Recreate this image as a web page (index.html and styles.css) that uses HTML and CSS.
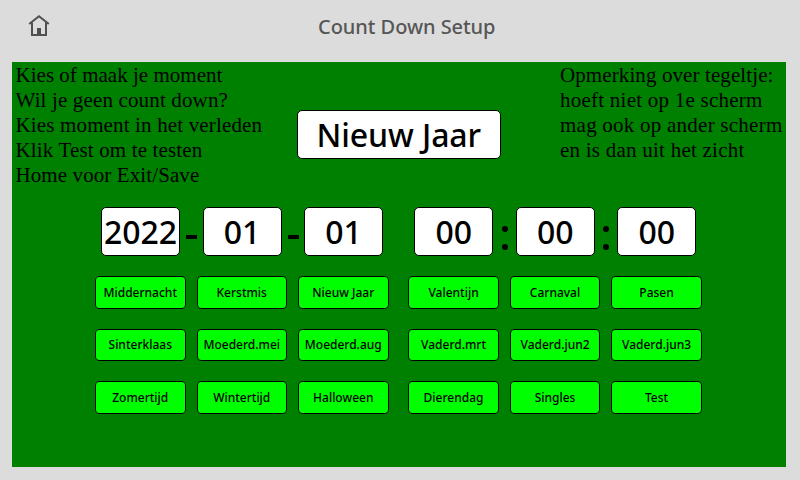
FILE: index.html
```
<!DOCTYPE html>
<html lang="nl">
<head>
<meta charset="utf-8">
<title>Count Down Setup</title>
<link rel="stylesheet" href="styles.css">
</head>
<body>
<header class="topbar">
<svg class="home" viewBox="0 0 22 22" width="22" height="22" fill="none" stroke="#505050"><path d="M1.2 9 11 1.3 20.8 9" stroke-width="2"/><path d="M4 7.5V20H18V7.5" stroke-width="2"/><path d="M9 13h4v7H9z" fill="#505050" stroke="none"/></svg>
<h1 class="title">Count Down Setup</h1>
</header>
<main class="panel">
<section class="intro">
<div class="note"><p><span class="l1">Kies of maak je moment</span></p><p><span class="l2">Wil je geen count down?</span></p><p><span class="l3">Kies moment in het verleden</span></p><p><span class="l4">Klik Test om te testen</span></p><p><span class="l5">Home voor Exit/Save</span></p></div>
<div class="field moment">Nieuw Jaar</div>
<div class="note remark"><p><span class="r1">Opmerking over tegeltje:</span></p><p><span class="r2">hoeft niet op 1e scherm</span></p><p><span class="r3">mag ook op ander scherm</span></p><p><span class="r4">en is dan uit het zicht</span></p></div>
</section>
<section class="values">
<div class="group"><div class="field">2022</div><span class="dash"></span><div class="field">01</div><span class="dash"></span><div class="field">01</div></div>
<div class="group"><div class="field">00</div><span class="colon"></span><div class="field">00</div><span class="colon"></span><div class="field">00</div></div>
</section>
<section class="presets">
<div class="buttons"><button>Middernacht</button><button>Kerstmis</button><button>Nieuw Jaar</button><button>Sinterklaas</button><button>Moederd.mei</button><button>Moederd.aug</button><button>Zomertijd</button><button>Wintertijd</button><button>Halloween</button></div>
<div class="buttons"><button>Valentijn</button><button>Carnaval</button><button>Pasen</button><button>Vaderd.mrt</button><button>Vaderd.jun2</button><button>Vaderd.jun3</button><button>Dierendag</button><button>Singles</button><button>Test</button></div>
</section>
</main>
</body>
</html>
```
FILE: styles.css
```
* { box-sizing: border-box; }
body { margin: 0; width: 800px; height: 480px; overflow: hidden; background: #dcdcdc; font-family: "Noto Sans", "Open Sans", sans-serif; color: #000; }
.topbar { height: 62px; display: grid; grid-template-columns: 28px 22px 1fr; align-items: start; }
.home { grid-column: 2; margin-top: 15px; }
.title { margin: 13px 0 0 268px; font-size: 20px; line-height: 27px; font-weight: 500; letter-spacing: -0.05px; color: #565656; white-space: nowrap; }
.panel { width: 774px; height: 405px; margin-left: 12px; background: #008000; }
.intro { height: 145px; display: grid; grid-template-columns: 284.5px 204.5px 1fr; align-items: start; }
.note { padding: 1px 0 0 3.5px; font-family: "Liberation Serif", serif; font-size: 21px; line-height: 25px; white-space: nowrap; }
.note p { margin: 0; }
.remark { padding-left: 59px; }
.l1 { letter-spacing: 0.02px; }
.l2, .l3, .l4 { letter-spacing: 0.15px; }
.l5, .r1 { letter-spacing: 0.1px; }
.r2, .r3, .r4 { letter-spacing: 0.24px; }
.field { width: 79px; height: 49px; border: 1px solid #000; border-radius: 5px; background: #fff; display: flex; align-items: center; justify-content: center; font-size: 32px; font-weight: 500; line-height: 44px; letter-spacing: -0.1px; white-space: nowrap; }
.moment { width: 204.5px; margin-top: 48px; }
.values { display: flex; gap: 31.3px; padding-left: 89px; height: 69px; }
.group { display: flex; height: 49px; }
.dash, .colon { width: 22.5px; display: flex; }
.dash::before { content: ""; width: 11px; height: 4px; margin: 27.5px 0 0 6px; background: #000; }
.colon { flex-direction: column; gap: 12px; padding: 18.5px 0 0 8.5px; }
.colon::before, .colon::after { content: ""; width: 6px; height: 6px; border-radius: 50%; background: #000; }
.presets { display: flex; gap: 19.8px; padding-left: 83px; }
.buttons { display: grid; grid-template-columns: repeat(3, 90.5px); grid-auto-rows: 32.5px; gap: 20px 11px; }
button { margin: 0; padding: 1px 0 0; border: 1px solid #000; border-radius: 4px; background: #0f0; color: #000; font: 500 12px/16px "Noto Sans", sans-serif; white-space: nowrap; }
```
